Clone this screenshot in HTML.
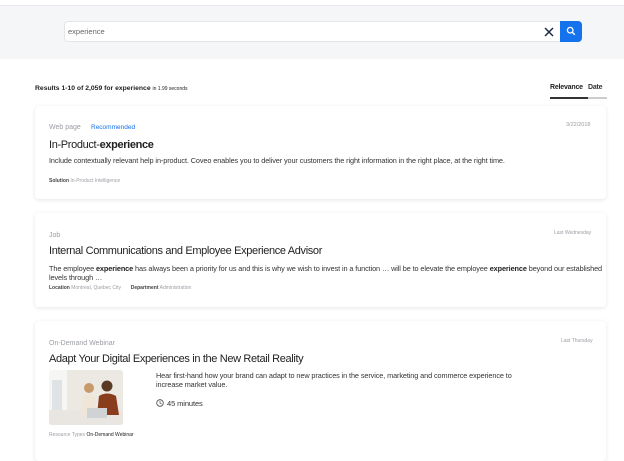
<!DOCTYPE html>
<html><head><meta charset="utf-8"><style>
*{margin:0;padding:0;box-sizing:border-box}
body{width:624px;height:448px;overflow:hidden;background:#fff;font-family:"Liberation Sans",sans-serif;color:#222;position:relative}
.a{position:absolute;white-space:nowrap}
.hdr{position:absolute;left:0;top:5px;width:624px;height:54px;background:#f5f6f8;border-top:1px solid #e8e9ec}
.box{position:absolute;left:64px;top:21px;width:497px;height:21px;background:#fff;border:1px solid #e3e5e8;border-radius:4px 0 0 4px}
.btn{position:absolute;left:560px;top:21px;width:22px;height:21px;background:#1372ec;border-radius:0 4px 4px 0}
.card{position:absolute;left:35px;width:571px;background:#fff;border-radius:4px;box-shadow:0 1px 4px rgba(0,0,0,.10)}
.g{color:#9a9da3}
.t{font-size:11px;color:#222;letter-spacing:-.35px}
.d{font-size:7.3px;color:#333;letter-spacing:-.1px}
.m{font-size:5px;color:#444}
b{font-weight:bold;color:#222}
</style></head><body>
<div class="hdr"></div>
<div class="box"></div>
<div class="a g" style="left:68px;top:27px;font-size:7.5px;color:#666">experience</div>
<svg class="a" style="left:544px;top:27px" width="10" height="10"><path d="M1 1L9 9M9 1L1 9" stroke="#1c2b4a" stroke-width="1.5"/></svg>
<div class="btn"></div>
<svg class="a" style="left:566px;top:26px" width="10" height="10"><circle cx="4.2" cy="4.2" r="2.8" fill="none" stroke="#fff" stroke-width="1.3"/><path d="M6.3 6.3L8.8 8.8" stroke="#fff" stroke-width="1.4"/></svg>

<div class="a" style="left:35px;top:85px;font-size:6.8px;font-weight:bold;color:#222">Results 1-10 of 2,059 for experience <span style="font-weight:normal;font-size:5px">in 1.99 seconds</span></div>
<div class="a" style="left:550px;top:84px;font-size:7px;font-weight:bold;color:#222;letter-spacing:-.2px">Relevance</div>
<div class="a" style="left:588px;top:84px;font-size:7px;font-weight:bold;color:#333;letter-spacing:-.2px">Date</div>
<div class="a" style="left:550px;top:97px;width:38px;height:2px;background:#333"></div>
<div class="a" style="left:588px;top:97px;width:19px;height:2px;background:#ccc"></div>

<div class="card" style="top:106px;height:93px"></div>
<div class="a g" style="left:49px;top:124px;font-size:7px">Web page</div>
<div class="a" style="left:91px;top:124px;font-size:6.5px;color:#1372ec">Recommended</div>
<div class="a g" style="left:566px;top:122px;font-size:5.5px">3/22/2018</div>
<div class="a t" style="left:49px;top:139px">In-Product-<b style="font-weight:bold">experience</b></div>
<div class="a d" style="left:49px;top:156px">Include contextually relevant help in-product. Coveo enables you to deliver your customers the right information in the right place, at the right time.</div>
<div class="a m" style="left:49px;top:178px"><span style="font-weight:bold">Solution</span> <span class="g">In-Product Intelligence</span></div>

<div class="card" style="top:213px;height:94px"></div>
<div class="a g" style="left:49px;top:232px;font-size:7px">Job</div>
<div class="a g" style="left:554px;top:230px;font-size:5px">Last Wednesday</div>
<div class="a t" style="left:49px;top:245px">Internal Communications and Employee Experience Advisor</div>
<div class="a d" style="left:49px;top:264px">The employee <b>experience</b> has always been a priority for us and this is why we wish to invest in a function … will be to elevate the employee <b>experience</b> beyond our established</div>
<div class="a d" style="left:49px;top:273px">levels through …</div>
<div class="a m" style="left:49px;top:285px"><span style="font-weight:bold">Location</span> <span class="g">Montreal, Quebec City</span> &nbsp;&nbsp;&nbsp;&nbsp;&nbsp;&nbsp;<span style="font-weight:bold">Department</span> <span class="g">Administration</span></div>

<div class="card" style="top:321px;height:140px"></div>
<div class="a g" style="left:49px;top:340px;font-size:7px">On-Demand Webinar</div>
<div class="a g" style="left:561px;top:338px;font-size:5px">Last Thursday</div>
<div class="a t" style="left:49px;top:353px">Adapt Your Digital Experiences in the New Retail Reality</div>
<svg class="a" style="left:49px;top:370px" width="74" height="55"><defs><clipPath id="c"><rect width="74" height="55" rx="3"/></clipPath></defs><g clip-path="url(#c)"><rect width="74" height="55" fill="#ece8e2"/><rect x="0" y="0" width="18" height="55" fill="#f6f6f4"/><rect x="3" y="10" width="10" height="30" fill="#dfe3e5"/><rect x="0" y="40" width="74" height="15" fill="#e9e6e2"/><circle cx="40" cy="18" r="5" fill="#c89a6a"/><path d="M32 45L34 26Q40 22 46 26L48 45Z" fill="#f0e6d8"/><circle cx="58" cy="16" r="5.5" fill="#5a3a24"/><path d="M48 45L50 26Q58 21 67 26L70 45Z" fill="#8a3d1c"/><rect x="38" y="38" width="20" height="10" fill="#cfd3d6"/></g></svg>
<div class="a d" style="left:156px;top:371px">Hear first-hand how your brand can adapt to new practices in the service, marketing and commerce experience to</div>
<div class="a d" style="left:156px;top:380px">increase market value.</div>
<svg class="a" style="left:156px;top:399px" width="8" height="8"><circle cx="4" cy="4" r="3.3" fill="none" stroke="#444" stroke-width=".8"/><path d="M4 2V4.2L5.5 5" fill="none" stroke="#444" stroke-width=".7"/></svg>
<div class="a d" style="left:167px;top:399px;font-size:7.5px">45 minutes</div>
<div class="a m" style="left:49px;top:432px"><span class="g">Resource Types</span> <span style="color:#222">On-Demand Webinar</span></div>
</body></html>
